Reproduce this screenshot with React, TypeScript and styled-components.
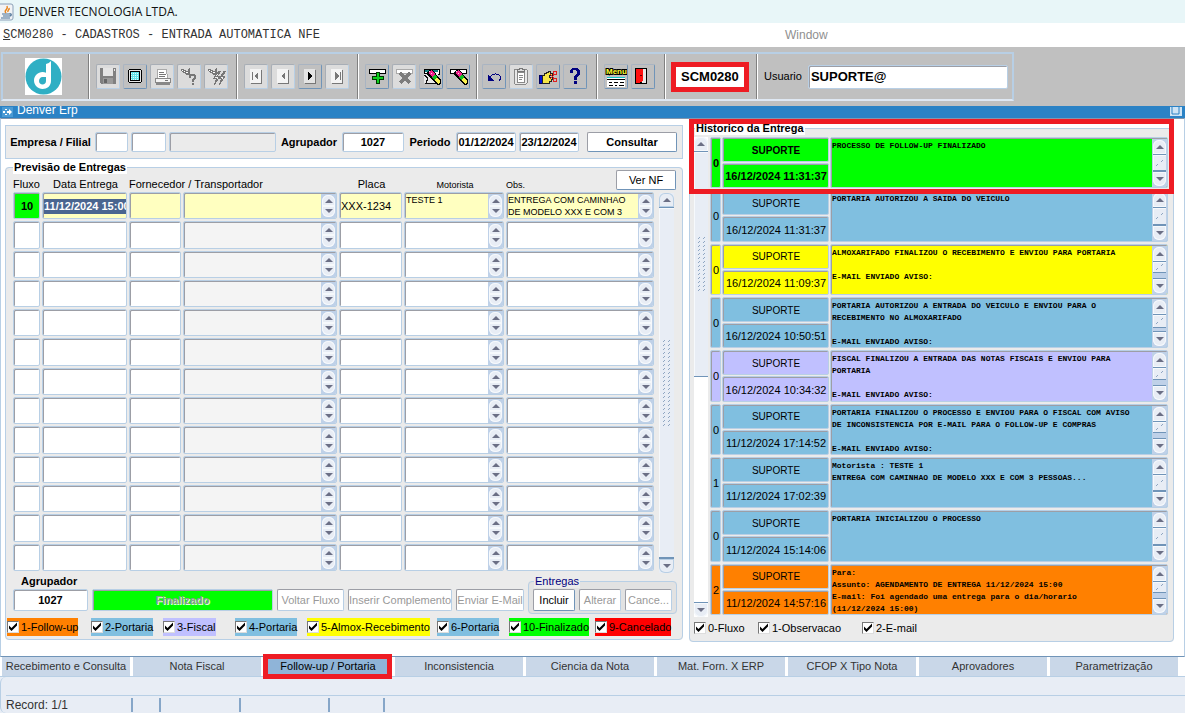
import React from 'react';
import styled, { createGlobalStyle, css } from 'styled-components';

const c = {
  line: '#b8cfe5',
  shade: '#9c9ea6',
  panel: '#ebebeb',
  soft: '#e8edf5',
  steel: '#7094b8',
  red: '#ee1c24',
  green: '#00ff00',
  blue: '#80bfe0',
  yellow: '#ffff00',
  lilac: '#c0c0ff',
  orange: '#ff8000',
  cream: '#ffffc0',
};

const Global = createGlobalStyle`
  *, *::before, *::after { box-sizing: border-box; }
  body { margin: 0; background: ${c.soft}; }
  body, button, input, textarea { font-family: "Liberation Sans", Arial, sans-serif; font-size: 11px; line-height: 13px; color: #000; }
  button, input, textarea { margin: 0; border-radius: 0; }
`;

const sunken = css`
  border: 1px solid ${c.line};
  box-shadow: inset 1px 1px 0 ${c.shade};
  border-radius: 2px;
`;

const Page = styled.div`
  display: flex;
  flex-direction: column;
  min-height: 100vh;
`;

const TitleBar = styled.header`
  display: flex;
  align-items: center;
  gap: 5px;
  height: 23px;
  background: #e8f6f8;
  font: 12px/16px "Open Sans", "Noto Sans", sans-serif;
  color: #111;
`;

const MenuBar = styled.nav`
  display: flex;
  align-items: center;
  height: 24px;
  padding-left: 3px;
  background: #fff;
`;

const MenuButton = styled.button<{ $mono?: boolean }>`
  padding: 0;
  border: 0;
  background: none;
  font-size: 12px;
  color: ${(p) => (p.$mono ? '#333' : '#8f8f8f')};
  ${(p) => p.$mono && css`
    width: 782px;
    text-align: left;
    font-family: "Liberation Mono", monospace;
  `}
`;

const ToolbarBand = styled.div`
  display: flex;
  padding: 5px 0 5px 1px;
  height: 59px;
  background: #c0c0c0;
`;

const Toolbar = styled.div`
  display: flex;
  border: 2px solid ${c.line};
  border-bottom-color: #dfe8f3;
  height: 49px;
`;

const ToolGroup = styled.div<{ $w: number; $pad?: number }>`
  display: flex;
  align-items: center;
  gap: 3px;
  width: ${(p) => p.$w}px;
  padding-left: ${(p) => p.$pad ?? 7}px;
  border-right: 1px solid #808080;
  box-shadow: 1px 0 0 #fff;
  &:last-child { border-right: 0; box-shadow: none; gap: 6px; }
`;

const ToolButton = styled.button`
  width: 24px;
  height: 25px;
  padding: 0;
  border: 1px solid #a9b4c2;
  border-right-color: ${c.steel};
  border-bottom-color: ${c.steel};
  border-radius: 2px;
  background: #c0c0c0;
  svg { display: block; }
  &:disabled {
    border-color: #a8aeb6 ${c.line} ${c.line} #a8aeb6;
    background: #dcdcdc;
  }
`;

const CodeBox = styled.div`
  position: relative;
`;

const CodeInput = styled.input`
  display: block;
  width: 76px;
  height: 28px;
  padding: 0 9px;
  border: 0;
  background: #fff;
  font-size: 13px;
  font-weight: bold;
`;

const Highlight = styled.span<{ $out: string }>`
  position: absolute;
  inset: ${(p) => p.$out};
  border: 5px solid ${c.red};
  pointer-events: none;
`;

const HistoryMark = styled.span`
  position: absolute;
  top: -3px;
  left: 0;
  right: 0;
  height: 75px;
  border: 5px solid ${c.red};
  pointer-events: none;
`;

const UserInput = styled.input`
  ${sunken}
  width: 200px;
  height: 24px;
  padding: 0 2px;
  font-size: 13px;
  font-weight: bold;
`;

const WindowBar = styled.div`
  display: flex;
  align-items: flex-end;
  height: 12px;
  padding: 0 3px 1px 2px;
  gap: 4px;
  overflow: hidden;
  background: #2b82c5;
  color: #fff;
  font-size: 12px;
  line-height: 14px;
  svg { flex: none; }
`;

const WindowName = styled.span`
  flex: 1;
`;

const Main = styled.main`
  display: flex;
  gap: 6px;
  padding: 3px 10px 14px 4px;
  border: 1px solid ${c.line};
  border-top-color: #8296ae;
  border-bottom-color: ${c.steel};
  background: #fff;
`;

const LeftColumn = styled.div`
  flex: 678 1 0;
  min-width: 0;
  padding-top: 3px;
`;

const FilterPanel = styled.form`
  display: flex;
  align-items: center;
  gap: 3px;
  height: 34px;
  padding: 0 5px 0 3px;
  border: 1px solid ${c.line};
  background: ${c.panel};
  font-weight: bold;
  white-space: nowrap;
`;

const FilterLabel = styled.label<{ $w: number }>`
  flex: none;
  width: ${(p) => p.$w}px;
  text-align: center;
`;

const Field = styled.input<{ $w?: number; $h?: number; $bg?: string; $bold?: boolean; $center?: boolean }>`
  ${sunken}
  ${(p) => (p.$w ? css`flex: none; width: ${p.$w}px;` : css`flex: 1; min-width: 0;`)}
  height: ${(p) => p.$h ?? 20}px;
  padding: 0;
  background: ${(p) => p.$bg ?? '#fff'};
  font-weight: ${(p) => (p.$bold ? 'bold' : 'normal')};
  text-align: ${(p) => (p.$center ? 'center' : 'left')};
`;

const Button = styled.button<{ $w: number; $h?: number; $bold?: boolean }>`
  flex: none;
  width: ${(p) => p.$w}px;
  height: ${(p) => p.$h ?? 20}px;
  padding: 0;
  border: 1px solid ${c.shade};
  border-right-color: ${c.steel};
  border-bottom-color: ${c.steel};
  border-radius: 2px;
  background: #fff;
  font-weight: ${(p) => (p.$bold ? 'bold' : 'normal')};
  white-space: nowrap;
  &:disabled {
    color: #999;
    border-color: ${c.shade} ${c.line} ${c.line} ${c.shade};
  }
`;

const SearchButton = styled(Button)`
  margin-left: 5px;
`;

const Group = styled.fieldset`
  position: relative;
  min-width: 0;
  margin: 0;
  padding: 0;
  border: 1px solid ${c.line};
  border-radius: 4px;
  background: ${c.panel};
`;

const Legend = styled.legend`
  height: 13px;
  margin-left: 5px;
  padding: 0 1px;
  background: #fff;
  font-weight: bold;
`;

const DeliveryGroup = styled(Group)`
  margin-top: 2px;
  padding: 0 0 3px 7px;
  & > legend { margin-left: 0; }
`;

const ViewButton = styled(Button)`
  position: absolute;
  top: -4px;
  right: 6px;
`;

const GridArea = styled.div`
  display: flex;
  gap: 3px;
  padding-right: 8px;
`;

const Table = styled.table<{ $h: number }>`
  flex: 1;
  min-width: 0;
  width: 100%;
  height: ${(p) => p.$h}px;
  table-layout: fixed;
  border-collapse: collapse;
`;

const Head = styled.th<{ $small?: boolean; $center?: boolean }>`
  height: 18px;
  padding: 3px 0 0;
  font-size: ${(p) => (p.$small ? 9 : 11)}px;
  font-weight: normal;
  text-align: ${(p) => (p.$center ? 'center' : 'left')};
  vertical-align: ${(p) => (p.$small ? 'bottom' : 'middle')};
  white-space: nowrap;
`;

const Cell = styled.td`
  height: 29px;
  padding: 0 2px 2px 0;
  vertical-align: top;
`;

const CellBox = styled.div<{ $bg: string }>`
  ${sunken}
  display: flex;
  align-items: center;
  width: 100%;
  height: 100%;
  padding: 1px 0 0 1px;
  overflow: hidden;
  background: ${(p) => p.$bg};
`;

const CellInput = styled.input<{ $bold?: boolean; $center?: boolean; $selected?: boolean; $tiny?: boolean }>`
  flex: 1;
  min-width: 0;
  width: 100%;
  height: 15px;
  padding: 0;
  border: 0;
  background: ${(p) => (p.$selected ? '#4a6590' : 'transparent')};
  color: ${(p) => (p.$selected ? '#fff' : 'inherit')};
  font-weight: ${(p) => (p.$bold ? 'bold' : 'normal')};
  font-size: ${(p) => (p.$tiny ? 10 : 11)}px;
  text-align: ${(p) => (p.$center ? 'center' : 'left')};
`;

const CellText = styled.textarea<{ $mono?: boolean }>`
  flex: 1;
  min-width: 0;
  height: 100%;
  padding: 0;
  border: 0;
  outline: 0;
  resize: none;
  overflow: hidden;
  white-space: pre;
  background: transparent;
  font-size: 9px;
  line-height: 12px;
  ${(p) => p.$mono && css`font: bold 8px/12px "Liberation Mono", monospace; padding-top: 1px;`}
`;

const SpinTrack = styled.span`
  flex: none;
  align-self: stretch;
  display: flex;
  flex-direction: column;
  justify-content: space-between;
  width: 15px;
  padding: 1px;
  background: #bfd1e8;
`;

const Arrow = styled.button<{ $down?: boolean; $tall?: boolean }>`
  display: flex;
  flex: ${(p) => (p.$tall ? 'none' : '1')};
  align-items: ${(p) => (p.$tall ? 'center' : p.$down ? 'flex-start' : 'flex-end')};
  justify-content: center;
  width: 100%;
  height: ${(p) => (p.$tall ? '15px' : 'auto')};
  padding: ${(p) => (p.$tall ? '0' : '3px 0')};
  border: 0 solid ${c.steel};
  border-width: ${(p) => (p.$tall ? (p.$down ? '1px 0 0' : '0 0 1px') : '0')};
  border-radius: ${(p) => (p.$down ? '0 0 6px 6px' : '6px 6px 0 0')};
  background: ${c.soft};
  box-shadow: inset 0 0 0 1px #f6f9fc;
  &::before {
    content: "";
    border: 4px solid transparent;
    border-top-width: ${(p) => (p.$down ? 4 : 0)}px;
    border-bottom-width: ${(p) => (p.$down ? 0 : 4)}px;
    border-top-color: #6b6f85;
    border-bottom-color: #6b6f85;
  }
`;

const Thumb = styled.span<{ $h?: number }>`
  display: flex;
  align-items: center;
  justify-content: center;
  min-height: 0;
  ${(p) => (p.$h ? css`height: ${p.$h}px;` : css`flex: 1;`)}
  border-bottom: 1px solid ${c.steel};
  background: ${c.soft};
  box-shadow: inset 1px 1px 0 #f6f9fc;
`;

const Rest = styled.span`
  flex: 1;
`;

const ScrollBar = styled.div<{ $bg: string }>`
  flex: none;
  display: flex;
  flex-direction: column;
  width: 14px;
  background: ${(p) => p.$bg};
`;

const GridScroll = styled(ScrollBar)`
  width: 15px;
  margin-top: 19px;
  & > button { box-shadow: inset 0 0 0 1px ${c.line}; }
`;

const ActionRow = styled.div`
  display: flex;
  align-items: flex-start;
  gap: 4px;
  padding: 2px 5px 0 0;
`;

const Stack = styled.label`
  display: flex;
  flex-direction: column;
  gap: 1px;
  font-weight: bold;
`;

const StackLabel = styled.span`
  padding-left: 8px;
`;

const Actions = styled.div`
  flex: 1;
  display: flex;
  gap: 4px;
  padding-top: 14px;
`;

const StatusInput = styled(Field)`
  color: #8f9a8f;
  text-shadow: 1px 1px 0 #e0ffe0;
`;

const SubGroup = styled(Group)`
  display: flex;
  gap: 4px;
  padding: 1px 4px 2px;
  background: #e2e2e2;
`;

const SubLegend = styled(Legend)`
  margin-left: 1px;
  background: ${c.panel};
  color: #000080;
  font-weight: normal;
`;

const FlowChecks = styled.div`
  display: grid;
  grid-template-columns: 84px 72px 72px 72px 130px 72px 86px auto;
  justify-items: start;
  margin-top: 4px;
  margin-left: -6px;
`;

const CheckLabel = styled.label<{ $bg?: string }>`
  display: flex;
  align-items: center;
  gap: 2px;
  height: 18px;
  background: ${(p) => p.$bg ?? 'transparent'};
  white-space: nowrap;
`;

const CheckBox = styled.input`
  appearance: none;
  width: 12px;
  height: 12px;
  border: 1px solid #777;
  border-right-color: #ddd;
  border-bottom-color: #ddd;
  background: #fff;
  &:checked::before {
    content: "";
    display: block;
    width: 10px;
    height: 10px;
    background: #000;
    clip-path: polygon(10% 35%, 35% 60%, 90% 5%, 90% 35%, 35% 90%, 10% 65%);
  }
`;

const HistoryColumn = styled.div`
  position: relative;
  flex: 485 1 0;
  min-width: 0;
`;

const HistoryArea = styled.div`
  display: flex;
  gap: 2px;
  padding: 2px 4px 0 4px;
`;

const HistoryCell = styled.td`
  height: 53px;
  padding: 0 1px 2px 0;
`;

const Pair = styled.div`
  display: flex;
  flex-direction: column;
  gap: 1px;
  height: 100%;
`;

const HistoryChecks = styled.div`
  display: grid;
  grid-template-columns: 64px 104px auto;
  justify-items: start;
  padding: 2px 4px 4px;
`;

const Tabs = styled.nav`
  display: flex;
  gap: 3px;
  height: 20px;
  padding: 0 7px 0 2px;
  background: #fff;
  border-bottom: 1px solid ${c.line};
`;

const Tab = styled.button<{ $active?: boolean }>`
  position: relative;
  flex: 1;
  min-width: 0;
  padding: 0;
  border: 0;
  background: ${(p) => (p.$active ? '#8fb4d8' : '#c9d7e8')};
  color: ${(p) => (p.$active ? '#000' : '#333')};
  white-space: nowrap;
`;

const Footer = styled.footer`
  flex: 1;
  display: flex;
  align-items: flex-end;
  min-height: 36px;
  border-left: 1px solid ${c.line};
  border-radius: 6px 0 0 6px;
`;

const StatusBar = styled.div`
  display: flex;
  align-items: center;
  width: 100%;
  height: 18px;
  margin-left: 5px;
  border-top: 1px solid ${c.line};
  font-size: 12px;
  line-height: 14px;
  color: #333;
`;

const StatusCell = styled.span<{ $w: number }>`
  width: ${(p) => p.$w}px;
  height: 14px;
  border-right: 2px solid #86a6c8;
`;

/* ---------- drawings ---------- */

const Svg = ({ children, w = 22, h = 23 }: { children: React.ReactNode; w?: number; h?: number }) => (
  <svg width={w} height={h} viewBox={`0 0 ${w} ${h}`} shapeRendering="crispEdges" aria-hidden="true">
    {children}
  </svg>
);

const Nav = ({ dir, bar, on }: { dir: 'l' | 'r'; bar?: boolean; on?: boolean }) => (
  <Svg>
    <rect x="6" y="5" width="11" height="14" fill="#777" />
    <rect x="5" y="4" width="11" height="14" fill={on ? '#e4e4e4' : '#f4f4f4'} />
    <path d={dir === 'l' ? 'M13 7v8l-4-4z' : 'M9 7v8l4-4z'} fill={on ? '#000' : '#777'} />
    {bar && <rect x={dir === 'l' ? 7 : 14} y="7" width="1" height="8" fill="#777" />}
  </Svg>
);

const Pencil = () => (
  <g>
    <path d="M7 7l3-3h2l9 11v4l-2 1h-2L7 10z" fill="#000" />
    <path d="M8 8l3-3 4 4-3 3z" fill="#f0208c" />
    <path d="M12 12l3-3 2 3-3 3z" fill="#10c020" />
    <path d="M14 15l3-3 3 4v2l-2 1z" fill="#f8f050" />
    <path d="M9 6h1v1H9zM11 8h1v1h-1z" fill="#ffd0e8" />
  </g>
);

const Torch = () => (
  <g>
    <path d="M3 4h3v1h2v1h2V4h1V3h1v7H8V9H7V8H5V7H4V6H3z" fill="#777" />
    <path d="M6 6h1v1H6zM8 7h2v1H8zM4 5h1v1H4z" fill="#fff" />
  </g>
);

const icons: Record<string, React.ReactNode> = {
  Salvar: (
    <Svg>
      <path d="M3 3h16v16H4l-1-1z" fill="#808080" />
      <rect x="6" y="3" width="10" height="8" fill="#e4e4e4" />
      <rect x="6" y="13" width="10" height="6" fill="#9a9a9a" />
      <rect x="7" y="14" width="3" height="4" fill="#666" />
      <rect x="17" y="4" width="1" height="2" fill="#e8e8e8" />
    </Svg>
  ),
  Tela: (
    <Svg>
      <path d="M5 4h12v1h1v12h-1v1H5v-1H4V5h1z" fill="#000" />
      <rect x="5" y="5" width="12" height="12" fill="#e8e8e8" />
      <rect x="6" y="6" width="10" height="10" fill="#000" />
      <rect x="7" y="7" width="8" height="8" fill="#62e4ea" />
      <path d="M7 8h8M7 10h8M7 12h8M7 14h8" stroke="#e0ffff" strokeDasharray="1 1" />
    </Svg>
  ),
  Imprimir: (
    <Svg>
      <path d="M6 4h9l2 9H6z" fill="#fff" stroke="#aaa" />
      <path d="M8 7h5M8 9h7M8 11h6" stroke="#777" />
      <path d="M4 13h15v4H4z" fill="#f4f4f4" stroke="#888" />
      <path d="M5 18h14v2H5z" fill="#888" />
      <rect x="14" y="15" width="3" height="1" fill="#777" />
    </Svg>
  ),
  'Entrar consulta': (
    <Svg>
      <Torch />
      <path d="M12 9h5v1h1v4h-1v1h-1v2h-2v-3h1v-1h1v-2h-3v2h-2v-3h1z" fill="#777" />
      <rect x="14" y="18" width="2" height="2" fill="#777" />
    </Svg>
  ),
  'Executar consulta': (
    <Svg>
      <Torch />
      <path d="M14 6l-5 7h3l-3 7 6-9h-3l4-5zM19 6l-4 7h2l-3 7 6-9h-3l4-5z" fill="#f0f0f0" stroke="#777" />
    </Svg>
  ),
  Primeiro: <Nav dir="l" bar />,
  Anterior: <Nav dir="l" />,
  Proximo: <Nav dir="r" on />,
  Ultimo: <Nav dir="r" bar />,
  Inserir: (
    <Svg>
      <path d="M3 4h16v4H3z" fill="#fff" stroke="#000" />
      <path d="M10 7h4v4h4v4h-4v4h-4v-4H6v-4h4z" fill="#003800" />
      <path d="M11 8h2v4h4v2h-4v4h-2v-4H7v-2h4z" fill="#10d020" />
    </Svg>
  ),
  Remover: (
    <Svg>
      <path d="M3 4h16v4H3z" fill="#fff" stroke="#aaa" />
      <path d="M7 8l10 10M17 8L7 18" stroke="#7d7d7d" strokeWidth="3" />
    </Svg>
  ),
  'Limpar bloco': (
    <Svg>
      <path d="M4 4h15v5h-3M4 4v4h12" fill="#fff" stroke="#000" />
      <path d="M5 5h13v2H5z" fill="#108080" />
      <path d="M4 9h14v9H4z" fill="#e8e8e8" />
      <path d="M4 10l4 3-2 5h10" fill="none" stroke="#111" />
      <Pencil />
    </Svg>
  ),
  'Limpar registro': (
    <Svg>
      <path d="M3 4h16v4H3z" fill="#fff" stroke="#000" />
      <Pencil />
    </Svg>
  ),
  Desfazer: (
    <Svg>
      <path d="M7 13c2-5 8-5 10-2 1 2 1 3-1 5" fill="none" stroke="#000080" />
      <path d="M5 9v7h6l-2-2-2-2z" fill="#000080" />
    </Svg>
  ),
  Copiar: (
    <Svg>
      <rect x="4" y="4" width="13" height="15" rx="1" fill="#e8e8e8" stroke="#888" />
      <rect x="7" y="7" width="7" height="10" fill="#fff" stroke="#888" />
      <path d="M7 6V4h2V3h3v1h2v2z" fill="#ddd" stroke="#777" />
      <path d="M9 10h4M9 12h4M9 14h3" stroke="#888" />
    </Svg>
  ),
  Recortar: (
    <Svg>
      <path d="M2 10h3v8H2z" fill="#0010d8" stroke="#000060" />
      <path d="M5 10h2V8h2V7h2V6h2v2h2v2h-3v2h3v2h-1v2h-2v2H5z" fill="#f4e448" stroke="#222" />
      <path d="M13 9l4 4M13 14l4-4" stroke="#e02020" />
      <path d="M16 6h3v3h-3zM16 13h3v3h-3z" fill="none" stroke="#e02020" />
    </Svg>
  ),
  Ajuda: (
    <Svg>
      <path d="M8 3h6v1h1v1h1v5h-1v1h-1v1h-1v3h-3v-4h1v-1h1V9h1V6h-1V5H9v3H6V5h1V4h1z" fill="#000080" />
      <rect x="10" y="16" width="3" height="3" fill="#000080" />
    </Svg>
  ),
  Menu: (
    <Svg>
      <text x="1" y="9" fontSize="8" fontWeight="bold" fill="#ffff30" stroke="#000" strokeWidth="2" paintOrder="stroke" fontFamily="Liberation Sans">Menu</text>
      <rect x="2" y="12" width="18" height="10" fill="#fff" />
      <rect x="2" y="12" width="18" height="1" fill="#10c8c8" />
      <path d="M2 14h18v1H2zM4 17h3v1H4zM9 17h4v1H9zM15 17h4v1h-4zM4 20h4v1H4zM10 20h2v1h-2zM14 20h5v1h-5z" fill="#000" />
    </Svg>
  ),
  Sair: (
    <Svg>
      <rect x="3" y="3" width="12" height="16" fill="#000" />
      <rect x="10" y="4" width="4" height="14" fill="#e8e8e8" />
      <path d="M4 4h7v12l-4 2H4z" fill="#ff1010" />
      <rect x="8" y="10" width="2" height="1" fill="#600" />
    </Svg>
  ),
};

const JavaIcon = () => (
  <svg width="14" height="18" viewBox="0 0 14 18" aria-hidden="true">
    <rect x="-4" y="1" width="17" height="16" rx="2" fill="#f1f3f6" stroke="#8ba0b8" />
    <path d="M6 10c-3-3 3-3 1-7M8 9c-1-2 2-2 1-4" fill="none" stroke="#e8851c" strokeWidth="1.500" />
    <path d="M2 11h7M3 13h6M1 15h9M9 11c3-1 3 2 0 2" fill="none" stroke="#4b7195" strokeWidth="1.200" />
  </svg>
);

const Logo = () => (
  <svg width="37" height="37" viewBox="0 0 37 37" role="img" aria-label="Denver">
    <rect width="37" height="37" fill="#fff" />
    <circle cx="18.500" cy="18.500" r="18" fill="#2fafc4" />
    <path d="M21 6q3-.5 5-3v20c0 5-4 8-8.500 8S9 27 9 22.500s4-8.500 8.500-8.500q2 0 3.500.8z" fill="#fff" />
    <path d="M21 19v4c0 2-1.500 3.500-3.500 3.500S14 25 14 23s1.500-4 3.500-4z" fill="#2fafc4" />
  </svg>
);

const Grip = ({ rows }: { rows: number }) => (
  <svg width="9" height={rows * 8} viewBox={`0 0 9 ${rows * 8}`} shapeRendering="crispEdges" aria-hidden="true">
    {Array.from({ length: rows }, (_, i) => (
      <g key={i} fill="#8fa6c2">
        <path d={`M7 ${i * 8 + 1}h1v1h-1v1h-1v-1h1z`} />
        <path d={`M2 ${i * 8 + 5}h1v1h-1v1h-1v-1h1z`} />
        {rows > 1 && <path d={`M7 ${i * 8 + 5}h1v1h-1v1h-1v-1h1zM2 ${i * 8 + 1}h1v1h-1v1h-1v-1h1z`} />}
      </g>
    ))}
  </svg>
);

/* ---------- parts ---------- */

const Tools = ({ names, off = [] }: { names: string[]; off?: string[] }) => (
  <>
    {names.map((n) => (
      <ToolButton key={n} type="button" aria-label={n} disabled={off.includes(n)}>{icons[n]}</ToolButton>
    ))}
  </>
);

const Spin = ({ thumb }: { thumb?: number | 'full' }) => (
  <SpinTrack>
    <Arrow type="button" aria-label="Subir" $tall={thumb !== undefined} />
    {thumb === 'full' && <Thumb><Grip rows={1} /></Thumb>}
    {typeof thumb === 'number' && <><Thumb $h={thumb}><Grip rows={1} /></Thumb><Rest /></>}
    <Arrow type="button" aria-label="Descer" $down $tall={thumb !== undefined} />
  </SpinTrack>
);

const Check = ({ text, bg }: { text: string; bg?: string }) => (
  <CheckLabel $bg={bg}><CheckBox type="checkbox" defaultChecked />{text}</CheckLabel>
);

type Delivery = { fluxo: string; data: string; forn: string; transp: string; placa: string; motorista: string; obs: string };

const blank: Delivery = { fluxo: '', data: '', forn: '', transp: '', placa: '', motorista: '', obs: '' };

const deliveries: Delivery[] = [
  { ...blank, fluxo: '10', data: '11/12/2024 15:00', placa: 'XXX-1234', motorista: 'TESTE 1', obs: 'ENTREGA COM CAMINHAO\nDE MODELO XXX E COM 3' },
  ...Array.from({ length: 12 }, () => blank),
];

const DeliveryRow = ({ row }: { row: Delivery }) => {
  const active = row.fluxo !== '';
  const bg = active ? c.cream : '#fff';
  return (
    <tr>
      <Cell><CellBox $bg={active ? c.green : '#fff'}><CellInput aria-label="Fluxo" defaultValue={row.fluxo} $bold $center /></CellBox></Cell>
      <Cell><CellBox $bg={bg}><CellInput aria-label="Data Entrega" defaultValue={row.data} $bold $selected={active} /></CellBox></Cell>
      <Cell><CellBox $bg={bg}><CellInput aria-label="Fornecedor" defaultValue={row.forn} /></CellBox></Cell>
      <Cell><CellBox $bg={active ? bg : '#f4f4f4'}><CellText rows={1} aria-label="Transportador" defaultValue={row.transp} /><Spin /></CellBox></Cell>
      <Cell><CellBox $bg={bg}><CellInput aria-label="Placa" defaultValue={row.placa} /></CellBox></Cell>
      <Cell><CellBox $bg={bg}><CellText rows={1} aria-label="Motorista" defaultValue={row.motorista} /><Spin /></CellBox></Cell>
      <Cell><CellBox $bg={bg}><CellText rows={1} aria-label="Observacao" defaultValue={row.obs} /><Spin /></CellBox></Cell>
    </tr>
  );
};

type Event = { n: string; when: string; text: string; bg: string; thumb: number | 'full'; bold?: boolean };

const history: Event[] = [
  { n: '0', when: '16/12/2024 11:31:37', text: 'PROCESSO DE FOLLOW-UP FINALIZADO', bg: c.green, thumb: 'full', bold: true },
  { n: '0', when: '16/12/2024 11:31:37', text: 'PORTARIA AUTORIZOU A SAIDA DO VEICULO', bg: c.blue, thumb: 'full' },
  { n: '0', when: '16/12/2024 11:09:37', text: 'ALMOXARIFADO FINALIZOU O RECEBIMENTO E ENVIOU PARA PORTARIA\n\nE-MAIL ENVIADO AVISO:', bg: c.yellow, thumb: 11 },
  { n: '0', when: '16/12/2024 10:50:51', text: 'PORTARIA AUTORIZOU A ENTRADA DO VEICULO E ENVIOU PARA O\nRECEBIMENTO NO ALMOXARIFADO\n\nE-MAIL ENVIADO AVISO:', bg: c.blue, thumb: 13 },
  { n: '0', when: '16/12/2024 10:34:32', text: 'FISCAL FINALIZOU A ENTRADA DAS NOTAS FISCAIS E ENVIOU PARA\nPORTARIA\n\nE-MAIL ENVIADO AVISO:', bg: c.lilac, thumb: 12 },
  { n: '0', when: '11/12/2024 17:14:52', text: 'PORTARIA FINALIZOU O PROCESSO E ENVIOU PARA O FISCAL COM AVISO\nDE INCONSISTENCIA POR E-MAIL PARA O FOLLOW-UP E COMPRAS\n\nE-MAIL ENVIADO AVISO:', bg: c.blue, thumb: 11 },
  { n: '1', when: '11/12/2024 17:02:39', text: 'Motorista : TESTE 1\nENTREGA COM CAMINHAO DE MODELO XXX E COM 3 PESSOAS...', bg: c.blue, thumb: 'full' },
  { n: '0', when: '11/12/2024 15:14:06', text: 'PORTARIA INICIALIZOU O PROCESSO', bg: c.blue, thumb: 'full' },
  { n: '2', when: '11/12/2024 14:57:16', text: 'Para:\nAssunto: AGENDAMENTO DE ENTREGA 11/12/2024 15:00\nE-mail: Foi agendado uma entrega para o dia/horario\n(11/12/2024 15:00)', bg: c.orange, thumb: 11 },
];

const HistoryRow = ({ ev }: { ev: Event }) => (
  <tr>
    <HistoryCell><CellBox $bg={ev.bg}><CellInput aria-label="Tipo" defaultValue={ev.n} $bold={ev.bold} $center /></CellBox></HistoryCell>
    <HistoryCell>
      <Pair>
        <CellBox $bg={ev.bg}><CellInput aria-label="Usuario" defaultValue="SUPORTE" $bold={ev.bold} $center $tiny /></CellBox>
        <CellBox $bg={ev.bg}><CellInput aria-label="Data" defaultValue={ev.when} $bold={ev.bold} $center /></CellBox>
      </Pair>
    </HistoryCell>
    <HistoryCell><CellBox $bg={ev.bg}><CellText rows={1} aria-label="Historico" defaultValue={ev.text} $mono /><Spin thumb={ev.thumb} /></CellBox></HistoryCell>
  </tr>
);

const tabs = ['Recebimento e Consulta', 'Nota Fiscal', 'Follow-up / Portaria', 'Inconsistencia', 'Ciencia da Nota', 'Mat. Forn. X ERP', 'CFOP X Tipo Nota', 'Aprovadores', 'Parametrização'];

export default function App() {
  return (
    <Page>
      <Global />
      <TitleBar><JavaIcon />DENVER TECNOLOGIA LTDA.</TitleBar>
      <MenuBar>
        <MenuButton $mono><u>S</u>CM0280 - CADASTROS - ENTRADA AUTOMATICA NFE</MenuButton>
        <MenuButton>Window</MenuButton>
      </MenuBar>
      <ToolbarBand>
        <Toolbar>
          <ToolGroup $w={86} $pad={22}><Logo /></ToolGroup>
          <ToolGroup $w={148}><Tools names={['Salvar', 'Tela', 'Imprimir', 'Entrar consulta', 'Executar consulta']} off={['Salvar', 'Imprimir', 'Entrar consulta', 'Executar consulta']} /></ToolGroup>
          <ToolGroup $w={121}><Tools names={['Primeiro', 'Anterior', 'Proximo', 'Ultimo']} off={['Primeiro', 'Anterior', 'Ultimo']} /></ToolGroup>
          <ToolGroup $w={119}><Tools names={['Inserir', 'Remover', 'Limpar bloco', 'Limpar registro']} off={['Remover']} /></ToolGroup>
          <ToolGroup $w={120} $pad={5}><Tools names={['Desfazer', 'Copiar', 'Recortar', 'Ajuda']} off={['Copiar']} /></ToolGroup>
          <ToolGroup $w={68}><Tools names={['Menu', 'Sair']} /></ToolGroup>
          <ToolGroup $w={92}>
            <CodeBox>
              <CodeInput aria-label="Programa" defaultValue="SCM0280" />
              <Highlight $out="-1px" />
            </CodeBox>
          </ToolGroup>
          <ToolGroup $w={255}>
            <label htmlFor="usuario">Usuario</label>
            <UserInput id="usuario" defaultValue="SUPORTE@" />
          </ToolGroup>
        </Toolbar>
      </ToolbarBand>
      <WindowBar>
        <svg width="11" height="10" viewBox="0 0 11 10" aria-hidden="true">
          <rect width="11" height="10" fill="#4a9ad4" />
          <path d="M1 5h2M4 2v1M4 7v1M5 5h2" stroke="#fff" strokeWidth="2" />
          <path d="M7 2l3 3-3 3z" fill="#fff" />
        </svg>
        <WindowName>Denver Erp</WindowName>
        <svg width="12" height="10" viewBox="0 0 12 10" aria-hidden="true">
          <rect width="12" height="9" fill="#cfe4f5" />
          <path d="M2 0v7h7V0" fill="none" stroke="#2b82c5" />
        </svg>
      </WindowBar>
      <Main>
        <LeftColumn>
          <FilterPanel onSubmit={(e) => e.preventDefault()}>
            <FilterLabel $w={83} htmlFor="empresa">Empresa / Filial</FilterLabel>
            <Field id="empresa" $w={33} />
            <Field aria-label="Filial" $w={35} />
            <Field aria-label="Nome da filial" readOnly $bg={c.panel} />
            <FilterLabel $w={60} htmlFor="agrupador">Agrupador</FilterLabel>
            <Field id="agrupador" $w={62} defaultValue="1027" $bold $center />
            <FilterLabel $w={46} htmlFor="periodo">Periodo</FilterLabel>
            <Field id="periodo" $w={60} defaultValue="01/12/2024" $bold $center />
            <Field aria-label="Periodo final" $w={60} defaultValue="23/12/2024" $bold $center />
            <SearchButton type="submit" $w={90} $bold>Consultar</SearchButton>
          </FilterPanel>
          <DeliveryGroup>
            <Legend>Previsão de Entregas</Legend>
            <ViewButton type="button" $w={60}>Ver NF</ViewButton>
            <GridArea>
              <Table $h={399}>
                <colgroup>
                  <col width="29" /><col width="87" /><col width="54" /><col width="156" /><col width="65" /><col width="102" /><col />
                </colgroup>
                <thead>
                  <tr>
                    <Head>Fluxo</Head>
                    <Head $center>Data Entrega</Head>
                    <Head colSpan={2}>Fornecedor / Transportador</Head>
                    <Head $center>Placa</Head>
                    <Head $small $center>Motorista</Head>
                    <Head $small>Obs.</Head>
                  </tr>
                </thead>
                <tbody>{deliveries.map((row, i) => <DeliveryRow key={i} row={row} />)}</tbody>
              </Table>
              <GridScroll $bg={c.soft}>
                <Arrow type="button" aria-label="Subir" $tall />
                <Thumb><Grip rows={11} /></Thumb>
                <Arrow type="button" aria-label="Descer" $down $tall />
              </GridScroll>
            </GridArea>
            <ActionRow>
              <Stack>
                <StackLabel>Agrupador</StackLabel>
                <Field $w={75} $h={22} defaultValue="1027" $bold $center />
              </Stack>
              <Actions>
                <StatusInput aria-label="Situação" readOnly $h={22} $bg={c.green} defaultValue="Finalizado" $bold $center />
                <Button type="button" $w={67} $h={22} disabled>Voltar Fluxo</Button>
                <Button type="button" $w={104} $h={22} disabled>Inserir Complemento</Button>
                <Button type="button" $w={68} $h={22} disabled>Enviar E-Mail</Button>
              </Actions>
              <SubGroup>
                <SubLegend>Entregas</SubLegend>
                <Button type="button" $w={42} $h={22}>Incluir</Button>
                <Button type="button" $w={42} $h={22} disabled>Alterar</Button>
                <Button type="button" $w={47} $h={22} disabled>Cance...</Button>
              </SubGroup>
            </ActionRow>
            <FlowChecks>
              <Check text="1-Follow-up" bg={c.orange} />
              <Check text="2-Portaria" bg={c.blue} />
              <Check text="3-Fiscal" bg={c.lilac} />
              <Check text="4-Portaria" bg={c.blue} />
              <Check text="5-Almox-Recebimento" bg={c.yellow} />
              <Check text="6-Portaria" bg={c.blue} />
              <Check text="10-Finalizado" bg={c.green} />
              <Check text="9-Cancelado" bg="#ff0000" />
            </FlowChecks>
          </DeliveryGroup>
        </LeftColumn>
        <HistoryColumn>
          <Group>
            <Legend>Historico da Entrega</Legend>
            <HistoryArea>
              <ScrollBar $bg="#fff">
                <Arrow type="button" aria-label="Subir" $tall />
                <Thumb $h={225}><Grip rows={7} /></Thumb>
                <Rest />
                <Arrow type="button" aria-label="Descer" $down $tall />
              </ScrollBar>
              <Table $h={480}>
                <colgroup><col width="12" /><col width="108" /><col /></colgroup>
                <tbody>{history.map((ev, i) => <HistoryRow key={i} ev={ev} />)}</tbody>
              </Table>
            </HistoryArea>
            <HistoryChecks>
              <Check text="0-Fluxo" />
              <Check text="1-Observacao" />
              <Check text="2-E-mail" />
            </HistoryChecks>
          </Group>
          <HistoryMark />
        </HistoryColumn>
      </Main>
      <Tabs>
        {tabs.map((t) => (
          <Tab key={t} type="button" $active={t.startsWith('Follow')}>
            {t}
            {t.startsWith('Follow') && <Highlight $out="-3px 0 -3px -1px" />}
          </Tab>
        ))}
      </Tabs>
      <Footer>
        <StatusBar>
          <StatusCell $w={127}>Record: 1/1</StatusCell>
          <StatusCell $w={28} />
          <StatusCell $w={80} />
          <StatusCell $w={89} />
          <StatusCell $w={55} />
        </StatusBar>
      </Footer>
    </Page>
  );
}
